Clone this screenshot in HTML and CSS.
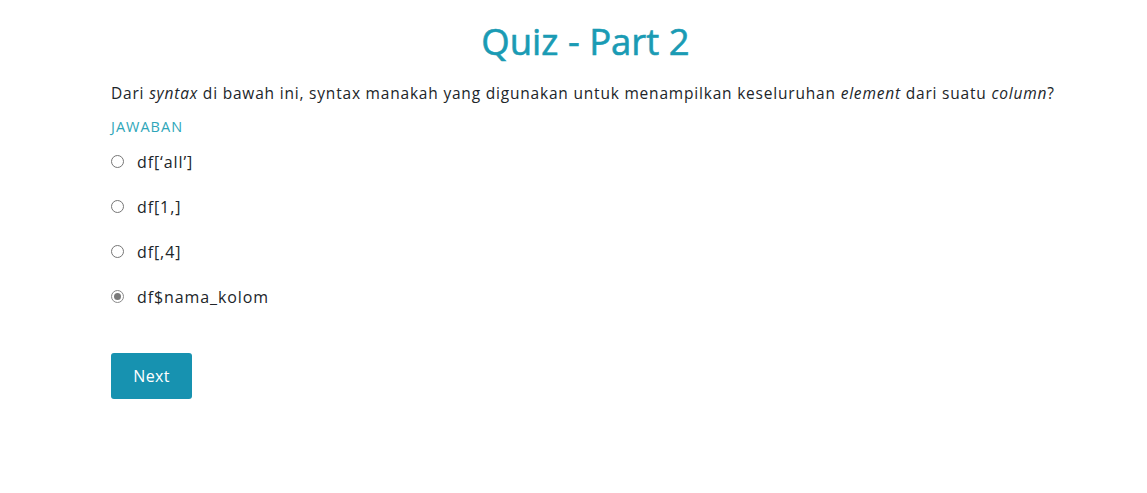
FILE: index.html
```html
<!DOCTYPE html>
<html>
<head>
<meta charset="utf-8">
<link rel="stylesheet" href="styles.css">
</head>
<body>
<main class="quiz">
  <h1 class="title">Quiz - Part 2</h1>
  <p class="question">Dari <em>syntax</em> di bawah ini, syntax manakah yang digunakan untuk menampilkan keseluruhan <em>element</em> dari suatu <em>column</em>?</p>
  <div class="label">JAWABAN</div>
  <ul class="options">
    <li class="option"><span class="radio"></span><span>df[‘all’]</span></li>
    <li class="option"><span class="radio"></span><span>df[1,]</span></li>
    <li class="option"><span class="radio"></span><span>df[,4]</span></li>
    <li class="option"><span class="radio checked"></span><span>df$nama_kolom</span></li>
  </ul>
  <button class="next">Next</button>
</main>
</body>
</html>
```
FILE: styles.css
```css
* { box-sizing: border-box; }
body {
  margin: 0;
  background: #fff;
  font-family: "Open Sans", "Liberation Sans", sans-serif;
  color: #212529;
}
.quiz {
  width: 949px;
  margin-left: 111px;
  padding-top: 18px;
}
.title {
  margin: 0;
  text-align: center;
  font-size: 36.5px;
  font-weight: 400;
  -webkit-text-stroke: 0.6px #1a9bb4;
  color: #1a9bb4;
  line-height: 46px;
}
.question {
  margin: 18px 0 0;
  font-size: 15.5px;
  letter-spacing: 0.8px;
  line-height: 22px;
  white-space: nowrap;
}
.label {
  margin-top: 13px;
  font-size: 14.5px;
  letter-spacing: 1px;
  color: #2ea6b9;
  line-height: 20px;
}
.options {
  list-style: none;
  margin: 8px 0 0;
  padding: 0;
}
.option {
  display: flex;
  align-items: center;
  gap: 13px;
  height: 45px;
  font-size: 16px;
  letter-spacing: 0.9px;
  padding-bottom: 12px;
}
.radio {
  width: 13px;
  height: 13px;
  border: 1px solid #767676;
  border-radius: 50%;
  display: inline-flex;
  align-items: center;
  justify-content: center;
}
.radio.checked { border-color: #8a8a8a; }
.radio.checked::after {
  content: "";
  width: 7px;
  height: 7px;
  border-radius: 50%;
  background: #7a7a7a;
}
.next {
  margin-top: 28px;
  width: 81px;
  height: 46px;
  border: none;
  border-radius: 3px;
  background: #1792b0;
  color: #fff;
  font-family: inherit;
  font-size: 16px;
  letter-spacing: 0.3px;
}
```
